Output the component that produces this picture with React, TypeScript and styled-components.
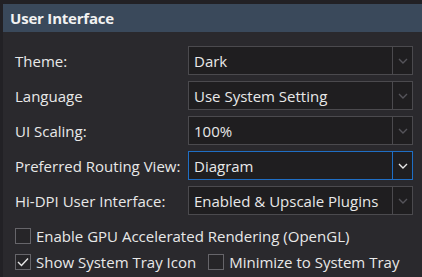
import styled, { createGlobalStyle } from 'styled-components';

const GlobalStyle = createGlobalStyle`
  html, body {
    margin: 0;
    padding: 0;
    background: #222125;
  }
  body {
    font-family: 'Open Sans', 'Noto Sans', sans-serif;
    color: #e8e8e8;
  }
`;

const Panel = styled.div`
  width: 422px;
  height: 277px;
  padding: 4px 0 0 3px;
  box-sizing: border-box;
  overflow: hidden;
`;

const Header = styled.div`
  height: 28px;
  background: #3a495b;
  display: flex;
  align-items: center;
  padding-left: 7px;
  font-size: 15px;
  font-weight: 700;
  letter-spacing: -0.2px;
  color: #f2f2f2;
`;

const Body = styled.div`
  background: #2a292d;
  height: 245px;
  padding: 14px 9px 0 12px;
  box-sizing: border-box;
`;

const Form = styled.div`
  display: grid;
  grid-template-columns: 173px 225px;
  grid-auto-rows: 29px;
  row-gap: 6px;
  align-items: center;
`;

const Label = styled.span`
  font-size: 15px;
`;

const Combo = styled.div<{ $focused?: boolean }>`
  height: 29px;
  box-sizing: border-box;
  display: flex;
  background: #1f1e20;
  border: 1px solid ${(p) => (p.$focused ? '#1f6ec4' : '#4b4a4e')};
  font-size: 15px;
`;

const ComboText = styled.div`
  flex: 1;
  display: flex;
  align-items: center;
  padding-left: 5px;
`;

const ComboArrow = styled.div<{ $focused?: boolean }>`
  width: 19px;
  border-left: 1px solid ${(p) => (p.$focused ? '#1f6ec4' : '#4b4a4e')};
  display: flex;
  align-items: center;
  justify-content: center;
  color: ${(p) => (p.$focused ? '#e8e8e8' : '#55545a')};
`;

const Checks = styled.div`
  margin-top: 13px;
  display: flex;
  flex-direction: column;
  gap: 10px;
`;

const CheckRow = styled.div`
  display: flex;
  align-items: center;
  gap: 12px;
`;

const CheckItem = styled.label`
  display: flex;
  align-items: center;
  gap: 5px;
  font-size: 15px;
  height: 16px;
`;

const Box = styled.span`
  width: 16px;
  height: 16px;
  box-sizing: border-box;
  border: 1px solid #66656a;
  background: #262528;
  display: flex;
  align-items: center;
  justify-content: center;
`;

const Chevron = () => (
  <svg width="10" height="6" viewBox="0 0 10 6">
    <path d="M1 1l4 4 4-4" fill="none" stroke="currentColor" strokeWidth="1.4" />
  </svg>
);

const Tick = () => (
  <svg width="12" height="10" viewBox="0 0 12 10">
    <path d="M1 5l3.5 3.5L11 1.5" fill="none" stroke="#e8e8e8" strokeWidth="1.4" />
  </svg>
);

const rows = [
  { label: 'Theme:', value: 'Dark' },
  { label: 'Language', value: 'Use System Setting' },
  { label: 'UI Scaling:', value: '100%' },
  { label: 'Preferred Routing View:', value: 'Diagram', focused: true },
  { label: 'Hi-DPI User Interface:', value: 'Enabled & Upscale Plugins' },
];

const Check = ({ text, checked }: { text: string; checked?: boolean }) => (
  <CheckItem>
    <Box>{checked && <Tick />}</Box>
    {text}
  </CheckItem>
);

export default function App() {
  return (
    <>
      <GlobalStyle />
      <Panel>
        <Header>User Interface</Header>
        <Body>
          <Form>
            {rows.map((r) => (
              <>
                <Label key={r.label}>{r.label}</Label>
                <Combo $focused={r.focused}>
                  <ComboText>{r.value}</ComboText>
                  <ComboArrow $focused={r.focused}>
                    <Chevron />
                  </ComboArrow>
                </Combo>
              </>
            ))}
          </Form>
          <Checks>
            <CheckRow>
              <Check text="Enable GPU Accelerated Rendering (OpenGL)" />
            </CheckRow>
            <CheckRow>
              <Check text="Show System Tray Icon" checked />
              <Check text="Minimize to System Tray" />
            </CheckRow>
          </Checks>
        </Body>
      </Panel>
    </>
  );
}
